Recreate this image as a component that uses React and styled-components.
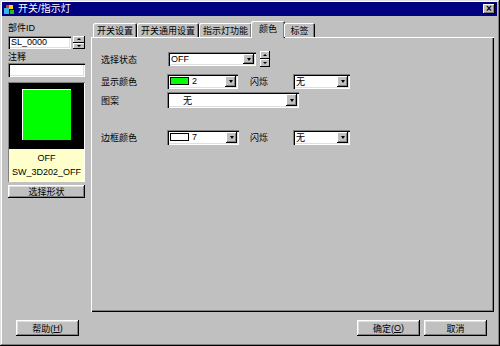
import React from 'react';
import styled, { createGlobalStyle } from 'styled-components';

const Global = createGlobalStyle`
  html, body { margin: 0; padding: 0; background: #c0c0c0; }
  * { box-sizing: border-box; }
`;

const font = `"Liberation Sans", "Noto Sans CJK SC", sans-serif`;

const Window = styled.div`
  width: 500px;
  height: 346px;
  background: #c0c0c0;
  padding: 2px;
  display: flex;
  flex-direction: column;
  font-family: ${font};
  font-size: 9px;
  color: #000;
  box-shadow: inset -1px -1px #000, inset 1px 1px #dfdfdf, inset -2px -2px #808080, inset 2px 2px #fff;
`;

const TitleBar = styled.div`
  height: 14px;
  background: #000080;
  color: #fff;
  display: flex;
  align-items: center;
  padding: 0 2px 0 2px;
  gap: 3px;
  font-size: 10px;
  margin-right: 1px;
`;

const TitleText = styled.span`
  flex: 1;
  line-height: 14px;
`;

const CloseBox = styled.div`
  width: 12px;
  height: 10px;
  background: #c0c0c0;
  color: #000;
  display: flex;
  align-items: center;
  justify-content: center;
  font-size: 10px;
  font-weight: bold;
  line-height: 1;
  box-shadow: inset -1px -1px #000, inset 1px 1px #fff, inset -2px -2px #808080;
`;

const Main = styled.div`
  display: flex;
  gap: 6px;
  padding: 5px 4px 0 6px;
`;

const LeftCol = styled.div`
  width: 77px;
  display: flex;
  flex-direction: column;
  padding-top: 1px;
`;

const Label = styled.div`
  height: 12px;
  line-height: 12px;
  margin-bottom: ${p => p.$mb || 0}px;
`;

const InputRow = styled.div`
  display: flex;
  gap: 2px;
  margin-bottom: 2px;
`;

const TextBox = styled.div`
  flex: ${p => (p.$grow ? 1 : 'none')};
  height: ${p => p.$h || 13}px;
  background: #fff;
  padding: 0 3px;
  line-height: ${p => p.$h || 13}px;
  box-shadow: inset 1px 1px #808080, inset 2px 2px #000, inset -1px -1px #fff, inset -2px -2px #dfdfdf;
`;

const Spinner = styled.div`
  width: ${p => p.$w || 12}px;
  height: ${p => p.$h || 13}px;
  margin-left: ${p => p.$ml || 0}px;
  display: flex;
  flex-direction: column;
`;

const SpinBtn = styled.div`
  flex: 1;
  background: #c0c0c0;
  display: flex;
  align-items: center;
  justify-content: center;
  box-shadow: inset -1px -1px #000, inset 1px 1px #fff;
`;

const Tri = styled.div`
  width: 0;
  height: 0;
  border-left: 2px solid transparent;
  border-right: 2px solid transparent;
  ${p => (p.$up ? 'border-bottom: 2px solid #000;' : 'border-top: 2px solid #000;')}
`;

const Preview = styled.div`
  margin-top: 5px;
  display: flex;
  flex-direction: column;
  box-shadow: inset 1px 1px #808080, inset -1px -1px #fff;
  padding: 1px;
`;

const LampArea = styled.div`
  height: 66px;
  background: #000;
  display: flex;
  justify-content: center;
  padding-top: 6px;
`;

const Lamp = styled.div`
  width: 49px;
  height: 51px;
  background: #00ff00;
  box-shadow: inset 1px 1px #fff;
`;

const InfoArea = styled.div`
  height: 32px;
  background: #ffffcc;
  display: flex;
  flex-direction: column;
  align-items: center;
  justify-content: center;
  gap: 4px;
  line-height: 10px;
`;

const Button = styled.div`
  width: ${p => p.$w || 63}px;
  height: ${p => p.$h || 16}px;
  background: #c0c0c0;
  display: flex;
  align-items: center;
  justify-content: center;
  margin-top: ${p => p.$mt || 0}px;
  box-shadow: inset -1px -1px #000, inset 1px 1px #fff, inset -2px -2px #808080, inset 2px 2px #dfdfdf;
`;

const RightCol = styled.div`
  flex: 1;
  display: flex;
  flex-direction: column;
`;

const TabStrip = styled.div`
  height: 16px;
  display: flex;
  align-items: flex-end;
  padding-left: 2px;
  position: relative;
  z-index: 1;
`;

const Tab = styled.div`
  height: ${p => (p.$active ? 17 : 14)}px;
  min-width: ${p => (p.$active ? 34 : 31)}px;
  padding: 0 ${p => (p.$active ? 6 : 4)}px;
  margin: ${p => (p.$active ? '0 -1px -1px -1px' : '0')};
  display: flex;
  align-items: center;
  justify-content: center;
  background: #c0c0c0;
  border-top-left-radius: 2px;
  border-top-right-radius: 2px;
  box-shadow: inset 1px 1px #fff, inset -1px 0 #000, inset -2px 0 #808080;
  padding-bottom: ${p => (p.$active ? 2 : 0)}px;
`;

const Panel = styled.div`
  height: 275px;
  padding: 14px 0 0 10px;
  display: flex;
  flex-direction: column;
  box-shadow: inset 1px 1px #fff, inset -1px -1px #000, inset -2px -2px #808080;
`;

const FormRow = styled.div`
  display: flex;
  align-items: center;
  height: 16px;
  margin-bottom: ${p => p.$mb || 0}px;
`;

const FieldLabel = styled.div`
  width: ${p => p.$w || 66}px;
  margin-left: ${p => p.$ml || 0}px;
  flex-shrink: 0;
`;

const Select = styled.div`
  width: ${p => p.$w}px;
  height: ${p => p.$h || 15}px;
  background: #fff;
  display: flex;
  align-items: center;
  padding: 2px 2px 2px 3px;
  gap: 3px;
  box-shadow: inset 1px 1px #808080, inset 2px 2px #000, inset -1px -1px #fff, inset -2px -2px #dfdfdf;
`;

const SelectText = styled.span`
  flex: 1;
  padding-left: ${p => p.$pl || 0}px;
  white-space: nowrap;
`;

const DropBtn = styled.div`
  width: 11px;
  align-self: stretch;
  background: #c0c0c0;
  display: flex;
  align-items: center;
  justify-content: center;
  box-shadow: inset -1px -1px #000, inset 1px 1px #fff, inset -2px -2px #808080;
`;

const DropTri = styled.div`
  width: 0;
  height: 0;
  border-left: 2.5px solid transparent;
  border-right: 2.5px solid transparent;
  border-top: 3px solid #000;
`;

const Swatch = styled.div`
  width: 19px;
  height: 8px;
  background: ${p => p.$color};
  border: 1px solid #000;
`;

const Footer = styled.div`
  display: flex;
  align-items: center;
  padding: 8px 11px 0 14px;
  gap: 4px;
`;

const Spacer = styled.div`
  flex: 1;
`;

function TitleIcon() {
  return (
    <svg width="11" height="11" viewBox="0 0 11 11">
      <rect x="0" y="4" width="5" height="6" fill="#3cb4e6" />
      <rect x="5" y="1" width="4" height="4" fill="#ffd800" />
      <rect x="6" y="6" width="4" height="4" fill="#20c020" />
      <rect x="2" y="1" width="3" height="3" fill="#e03030" />
    </svg>
  );
}

function Drop({ w, children, swatch, pl, h }) {
  return (
    <Select $w={w} $h={h}>
      {swatch && <Swatch $color={swatch} />}
      <SelectText $pl={pl}>{children}</SelectText>
      <DropBtn><DropTri /></DropBtn>
    </Select>
  );
}

export default function App() {
  const tabs = ['开关设置', '开关通用设置', '指示灯功能', '颜色', '标签'];
  return (
    <>
      <Global />
      <Window>
        <TitleBar>
          <TitleIcon />
          <TitleText>开关/指示灯</TitleText>
          <CloseBox>×</CloseBox>
        </TitleBar>
        <Main>
          <LeftCol>
            <Label $mb={2}>部件ID</Label>
            <InputRow>
              <TextBox $grow>SL_0000</TextBox>
              <Spinner>
                <SpinBtn><Tri $up /></SpinBtn>
                <SpinBtn><Tri /></SpinBtn>
              </Spinner>
            </InputRow>
            <Label>注释</Label>
            <TextBox $h={14} />
            <Preview>
              <LampArea><Lamp /></LampArea>
              <InfoArea>
                <span>OFF</span>
                <span>SW_3D202_OFF</span>
              </InfoArea>
            </Preview>
            <Button $w={77} $h={13} $mt={3}>选择形状</Button>
          </LeftCol>
          <RightCol>
            <TabStrip>
              {tabs.map(t => (
                <Tab key={t} $active={t === '颜色'}>{t}</Tab>
              ))}
            </TabStrip>
            <Panel>
              <FormRow $mb={6}>
                <FieldLabel $w={67}>选择状态</FieldLabel>
                <Drop w={88} h={14}>OFF</Drop>
                <Spinner $w={10} $h={16} $ml={4}>
                  <SpinBtn><Tri $up /></SpinBtn>
                  <SpinBtn><Tri /></SpinBtn>
                </Spinner>
              </FormRow>
              <FormRow $mb={3}>
                <FieldLabel>显示颜色</FieldLabel>
                <Drop w={71} swatch="#00ff00">2</Drop>
                <FieldLabel $w={43} $ml={12}>闪烁</FieldLabel>
                <Drop w={57}>无</Drop>
              </FormRow>
              <FormRow $mb={21}>
                <FieldLabel>图案</FieldLabel>
                <Drop w={132} h={16} pl={13}>无</Drop>
              </FormRow>
              <FormRow>
                <FieldLabel>边框颜色</FieldLabel>
                <Drop w={72} swatch="#ffffff">7</Drop>
                <FieldLabel $w={43} $ml={11}>闪烁</FieldLabel>
                <Drop w={57}>无</Drop>
              </FormRow>
            </Panel>
          </RightCol>
        </Main>
        <Footer>
          <Button>帮助(<u>H</u>)</Button>
          <Spacer />
          <Button>确定(<u>O</u>)</Button>
          <Button>取消</Button>
        </Footer>
      </Window>
    </>
  );
}
